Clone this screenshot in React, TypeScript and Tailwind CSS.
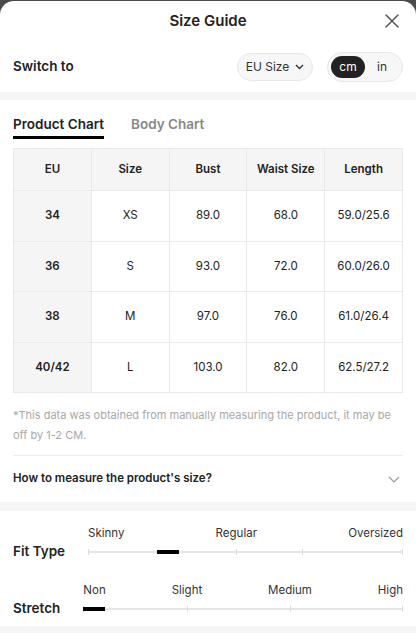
import React from 'react';

type Row = { eu: string; size: string; bust: string; waist: string; length: string };

const rows: Row[] = [
  { eu: '34', size: 'XS', bust: '89.0', waist: '68.0', length: '59.0/25.6' },
  { eu: '36', size: 'S', bust: '93.0', waist: '72.0', length: '60.0/26.0' },
  { eu: '38', size: 'M', bust: '97.0', waist: '76.0', length: '61.0/26.4' },
  { eu: '40/42', size: 'L', bust: '103.0', waist: '82.0', length: '62.5/27.2' },
];

const rowHeights = ['h-[51px]', 'h-[50px]', 'h-[51px]', 'h-[50px]'];

const Scale: React.FC<{
  title: string;
  labels: string[];
  ticks: string[];
  bar: string;
}> = ({ title, labels, ticks, bar }) => (
  <div className="flex items-end gap-[23px]">
    <div className="h-[20px] flex items-center text-[13.5px] font-semibold text-[#222] leading-none">{title}</div>
    <div className="flex-1 flex flex-col">
      <div className="flex justify-between text-[11.5px] text-[#333] leading-[18px]">
        {labels.map((l) => (
          <span key={l}>{l}</span>
        ))}
      </div>
      <div className="relative h-[20px]">
        <div className="absolute left-0 right-0 top-[9px] h-[2px] bg-[#e6e6e6]" />
        {ticks.map((t) => (
          <div key={t} className={`absolute top-[7px] w-[1px] h-[6px] bg-[#dcdcdc] ${t}`} />
        ))}
        <div className={`absolute top-[8px] h-[4px] w-[22px] bg-black ${bar}`} />
      </div>
    </div>
  </div>
);

const App: React.FC = () => {
  return (
    <div className="w-[416px] h-[633px] bg-[#4a4a4a] pt-[1px] overflow-hidden font-['Inter',sans-serif]">
      <div className="h-full bg-white rounded-t-[14px] flex flex-col text-[#222]">
        {/* header */}
        <div className="relative h-[40px] flex items-center justify-center">
          <h1 className="text-[15px] font-semibold">Size Guide</h1>
          <svg className="absolute right-[17px] top-[13px]" width="14" height="14" viewBox="0 0 14 14">
            <path d="M1 1L13 13M13 1L1 13" stroke="#555" strokeWidth="1.5" strokeLinecap="round" />
          </svg>
        </div>

        {/* unit switch */}
        <div className="h-[51px] px-[13px] flex items-center justify-between">
          <span className="text-[13.5px] font-semibold">Switch to</span>
          <div className="flex items-center gap-[14px]">
            <div className="h-[28px] w-[76px] rounded-full border border-[#e8e8e8] bg-[#f7f7f7] flex items-center justify-center gap-[6px] text-[12px] text-[#333]">
              EU Size
              <svg width="9" height="6" viewBox="0 0 9 6">
                <path d="M1 1L4.5 4.5L8 1" stroke="#333" strokeWidth="1.4" fill="none" />
              </svg>
            </div>
            <div className="h-[30px] w-[76px] rounded-full border border-[#e8e8e8] bg-[#f7f7f7] flex items-center p-[3px]">
              <div className="h-[22px] w-[34px] rounded-full bg-[#222] text-white text-[12px] flex items-center justify-center">
                cm
              </div>
              <div className="flex-1 text-center text-[12px] text-[#333]">in</div>
            </div>
          </div>
        </div>

        <div className="h-[8px] bg-[#f5f5f5]" />

        {/* chart */}
        <div className="px-[13px] pt-[14px]">
          <div className="flex gap-[27px] text-[13.5px] font-semibold leading-[20px]">
            <div className="flex flex-col">
              <span>Product Chart</span>
              <div className="mt-[2px] h-[3px] bg-black" />
            </div>
            <span className="text-[#888]">Body Chart</span>
          </div>

          <table className="mt-[9px] w-[390px] border-collapse table-fixed text-[11.5px]">
            <thead>
              <tr className="h-[42px] bg-[#f5f5f5]">
                {['EU', 'Size', 'Bust', 'Waist Size', 'Length'].map((h) => (
                  <th key={h} className="border border-[#e9e9e9] font-semibold text-center">
                    {h}
                  </th>
                ))}
              </tr>
            </thead>
            <tbody>
              {rows.map((r, i) => (
                <tr key={r.eu} className={rowHeights[i]}>
                  <td className="border border-[#e9e9e9] bg-[#f5f5f5] font-semibold text-center">{r.eu}</td>
                  <td className="border border-[#e9e9e9] text-center">{r.size}</td>
                  <td className="border border-[#e9e9e9] text-center">{r.bust}</td>
                  <td className="border border-[#e9e9e9] text-center">{r.waist}</td>
                  <td className="border border-[#e9e9e9] text-center">{r.length}</td>
                </tr>
              ))}
            </tbody>
          </table>

          <p className="mt-[12px] text-[11px] leading-[20px] text-[#a8a8a8]">
            *This data was obtained from manually measuring the product, it may be off by 1-2 CM.
          </p>

          <div className="mt-[10px] border-t border-[#ebebeb] h-[47px] flex items-center justify-between">
            <span className="text-[11.5px] font-semibold">How to measure the product's size?</span>
            <svg className="mr-[3px]" width="12" height="7" viewBox="0 0 12 7">
              <path d="M1 1L6 6L11 1" stroke="#999" strokeWidth="1.1" fill="none" />
            </svg>
          </div>
        </div>

        <div className="h-[9px] bg-[#f5f5f5]" />

        {/* fit scales */}
        <div className="px-[13px] pt-[13px] pb-[7px] flex flex-col gap-[19px]">
          <Scale
            title="Fit Type"
            labels={['Skinny', 'Regular', 'Oversized']}
            ticks={['left-0', 'left-[47%]', 'left-[68%]', 'right-0']}
            bar="left-[22%]"
          />
          <Scale
            title="Stretch"
            labels={['Non', 'Slight', 'Medium', 'High']}
            ticks={['left-0', 'left-[32.4%]', 'left-[64.8%]', 'right-0']}
            bar="left-0"
          />
        </div>

        <div className="flex-1 bg-[#f5f5f5]" />
      </div>
    </div>
  );
};

export default App;
